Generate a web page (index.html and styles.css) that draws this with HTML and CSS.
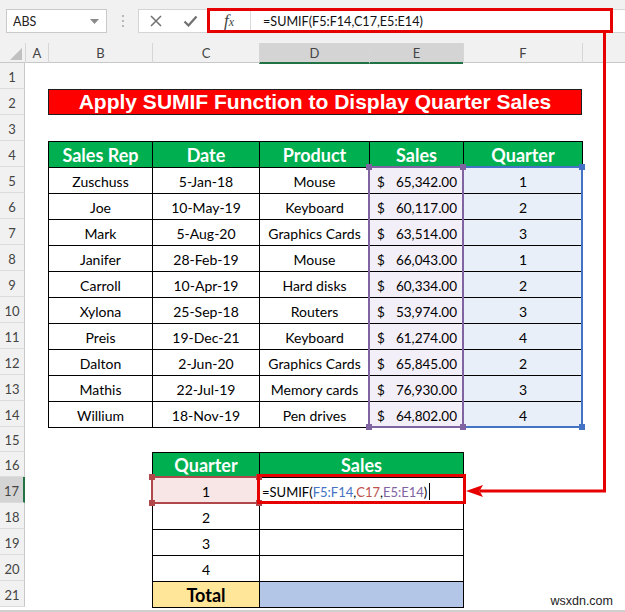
FILE: index.html
```html
<!DOCTYPE html>
<html>
<head>
<meta charset="utf-8">
<title>SUMIF</title>
<link rel="stylesheet" href="styles.css">
</head>
<body>
<div class="app">
  <div class="fbar">
    <div class="namebox"><span>ABS</span><svg class="dd" width="9" height="5" viewBox="0 0 9 5"><path d="M0 0H9L4.5 5Z" fill="#8a8a8a"/></svg></div>
    <div class="grip"><i></i><i></i><i></i></div>
    <div class="formula">
      <span class="fbtn"><svg width="12" height="12" viewBox="0 0 12 12"><path d="M1 1L11 11M11 1L1 11" stroke="#707070" stroke-width="1.5" fill="none"/></svg></span>
      <span class="fbtn"><svg width="15" height="12" viewBox="0 0 15 12"><path d="M1.5 6.5L5.5 10.5L13.5 1.5" stroke="#707070" stroke-width="2.2" fill="none"/></svg></span>
      <span class="fx">f<span>x</span></span>
      <span class="ftext">=SUMIF(F5:F14,C17,E5:E14)</span>
    </div>
  </div>

  <div class="colheads">
    <div class="corner"><svg width="25" height="20" viewBox="0 0 25 20"><path d="M22 5V17H10Z" fill="#c0c0c0"/></svg></div>
    <div class="ch">A</div>
    <div class="ch">B</div>
    <div class="ch">C</div>
    <div class="ch sel">D</div>
    <div class="ch sel">E</div>
    <div class="ch">F</div>
    <div class="ch"></div>
  </div>

  <div class="sheet">
    <div class="rh">1</div><div class="rh">2</div><div class="rh">3</div><div class="rh">4</div>
    <div class="rh">5</div><div class="rh">6</div><div class="rh">7</div><div class="rh">8</div>
    <div class="rh">9</div><div class="rh">10</div><div class="rh">11</div><div class="rh">12</div>
    <div class="rh">13</div><div class="rh">14</div><div class="rh">15</div><div class="rh">16</div>
    <div class="rh sel">17</div><div class="rh">18</div><div class="rh">19</div><div class="rh">20</div>
    <div class="rh">21</div>

    <div class="title">Apply SUMIF Function to Display Quarter Sales</div>

    <div class="t1">
      <div class="th">Sales Rep</div><div class="th">Date</div><div class="th">Product</div><div class="th">Sales</div><div class="th">Quarter</div>
      <div>Zuschuss</div><div>5-Jan-18</div><div>Mouse</div><div class="cur"><span>$</span><span>65,342.00</span></div><div class="q">1</div>
      <div>Joe</div><div>10-May-19</div><div>Keyboard</div><div class="cur"><span>$</span><span>60,117.00</span></div><div class="q">2</div>
      <div>Mark</div><div>5-Aug-20</div><div>Graphics Cards</div><div class="cur"><span>$</span><span>63,514.00</span></div><div class="q">3</div>
      <div>Janifer</div><div>28-Feb-19</div><div>Mouse</div><div class="cur"><span>$</span><span>66,043.00</span></div><div class="q">1</div>
      <div>Carroll</div><div>10-Apr-19</div><div>Hard disks</div><div class="cur"><span>$</span><span>60,334.00</span></div><div class="q">2</div>
      <div>Xylona</div><div>25-Sep-18</div><div>Routers</div><div class="cur"><span>$</span><span>53,974.00</span></div><div class="q">3</div>
      <div>Preis</div><div>19-Dec-21</div><div>Keyboard</div><div class="cur"><span>$</span><span>61,274.00</span></div><div class="q">4</div>
      <div>Dalton</div><div>2-Jun-20</div><div>Graphics Cards</div><div class="cur"><span>$</span><span>65,845.00</span></div><div class="q">2</div>
      <div>Mathis</div><div>22-Jul-19</div><div>Memory cards</div><div class="cur"><span>$</span><span>76,930.00</span></div><div class="q">3</div>
      <div>Willium</div><div>18-Nov-19</div><div>Pen drives</div><div class="cur"><span>$</span><span>64,802.00</span></div><div class="q">4</div>
    </div>

    <div class="rng rng-f"><i class="k tl"></i><i class="k tr"></i><i class="k bl"></i><i class="k br"></i></div>
    <div class="rng rng-e"><i class="k tl"></i><i class="k tr"></i><i class="k bl"></i><i class="k br"></i></div>

    <div class="t2">
      <div class="th">Quarter</div><div class="th">Sales</div>
      <div class="c17">1</div><div class="fcell">=SUMIF(<span class="rb">F5:F14</span>,<span class="rr">C17</span>,<span class="rp">E5:E14</span>)<i class="caret"></i></div>
      <div>2</div><div></div>
      <div>3</div><div></div>
      <div>4</div><div></div>
      <div class="tot">Total</div><div class="blu"></div>
    </div>

    <div class="rng rng-c"><i class="k tl"></i><i class="k tr"></i><i class="k bl"></i><i class="k br"></i></div>
    <div class="redbox"></div>
  </div>

  <div class="bottom"></div>

  <svg class="annot" width="625" height="612" viewBox="0 0 625 612">
    <rect x="208.5" y="9.5" width="403" height="22" fill="none" stroke="#e60000" stroke-width="3"/>
    <path d="M604.5 33V491H480" fill="none" stroke="#e60000" stroke-width="3"/>
    <path d="M466 491L483 485L479.5 491L483 497Z" fill="#e60000"/>
  </svg>
  <div class="wm">wsxdn.com</div>
</div>
</body>
</html>
```

FILE: styles.css
```css
* { box-sizing: border-box; margin: 0; padding: 0; }
html, body { width: 625px; height: 612px; overflow: hidden; background: #fff; }
body { font-family: Lato, "Liberation Sans", sans-serif; color: #000; }

.app { position: relative; width: 625px; height: 612px; }

/* formula bar */
.fbar { height: 43px; background: #f1f1f1; display: flex; align-items: flex-start; padding-top: 9px; }
.namebox { margin-left: 6px; width: 101px; height: 24px; background: #fff; border: 1px solid #cacaca;
  display: flex; align-items: center; justify-content: space-between; padding: 0 7px 0 6px;
  font-size: 12.5px; color: #222; }
.grip { width: 31px; height: 24px; display: flex; flex-direction: column; align-items: center; justify-content: center; gap: 3px; }
.grip i { width: 2px; height: 2px; background: #b8b8b8; }
.formula { flex: 1; height: 24px; background: #fff; border: 1px solid #d4d4d4; border-right: none; display: flex; align-items: center; }
.fbtn { width: 34px; display: flex; justify-content: center; align-items: center; }
.fbtn + .fbtn { width: 35px; }
.fx { width: 42px; text-align: center; font-family: "Liberation Serif", serif; font-style: italic; font-size: 17px; color: #444; }
.fx span { font-size: 12px; }
.ftext { border-left: 1px solid #dadada; height: 100%; display: flex; align-items: center; padding-left: 12px; font-size: 12.6px; color: #111; }

/* column headers */
.colheads { display: grid; grid-template-columns: 25px 23px 104px 107px 110px 94px 119px 1fr; height: 20px;
  background: #f1f1f1; border-bottom: 1px solid #c8c8c8; }
.corner { display: flex; }
.ch { border-left: 1px solid #d6d6d6; display: flex; align-items: center; justify-content: center; font-size: 13px; color: #444; }
.ch.sel { background: #d4d4d4; border-bottom: 2px solid #217346; margin-bottom: -1px; }

/* sheet grid */
.sheet { display: grid; grid-template-columns: 25px 23px 104px 107px 110px 94px 119px 1fr;
  grid-template-rows: repeat(14, 26px) 25px 25px repeat(5, 26px); }
.rh { grid-column: 1; background: #f1f1f1; border-right: 1px solid #c8c8c8; border-bottom: 1px solid #dcdcdc;
  display: flex; align-items: center; justify-content: center; font-size: 13px; color: #444; padding-top: 2px; }
.rh.sel { background: #d4d4d4; border-right: 2px solid #217346; }

.title { grid-column: 3 / 8; grid-row: 2; background: #ff0000; border: 1px solid #1e1e1e; color: #fff;
  font-family: "Liberation Sans", Arial, sans-serif; font-weight: 700; font-size: 21px;
  display: flex; align-items: center; justify-content: center; }

.t1, .t2 { justify-self: start; align-self: start; display: grid; gap: 1px; padding: 1px; background: #000; }
.t1 { grid-column: 3 / 8; grid-row: 4 / 15; grid-template-columns: 103px 106px 109px 93px 118px; grid-template-rows: repeat(11, 25px); }
.t2 { grid-column: 4 / 7; grid-row: 16 / 22; grid-template-columns: 106px 203px; grid-template-rows: 24px repeat(5, 25px); }
.t1 > div, .t2 > div { background: #fff; display: flex; align-items: center; justify-content: center; font-size: 14px; padding-top: 2px; white-space: nowrap; }
.t1 > .th, .t2 > .th { background: #00b050; color: #fff; font-weight: 700; font-size: 18px; padding-top: 0; }
.t1 > .cur { justify-content: space-between; padding: 2px 6px 0 7px; background: #f3eff8; font-size: 13.5px; }
.t1 > .q { background: #e9eff8; }
.t2 > .c17 { background: #f8e5e5; }
.t2 > .fcell { justify-content: flex-start; padding-left: 2px; font-size: 13px; }
.t2 > .tot { background: #ffe699; font-weight: 700; font-size: 18px; padding-top: 0; }
.t2 > .blu { background: #b4c6e7; }
.rb { color: #4472c4; }
.rr { color: #c0504d; }
.rp { color: #8064a2; }
.caret { display: inline-block; width: 1px; height: 17px; background: #000; margin-left: 2px; }

/* range highlights */
.rng { position: relative; margin: -1px; border: 2px solid; }
.rng-e { grid-column: 6; grid-row: 5 / 15; color: #8064a2; border-color: #8064a2; z-index: 3; }
.rng-f { grid-column: 7; grid-row: 5 / 15; color: #4472c4; border-color: #4472c4; z-index: 2; }
.rng-c { grid-column: 4; grid-row: 17; color: #b0474a; border-color: #b0474a; z-index: 2; }
.k { position: absolute; width: 6px; height: 6px; background: currentColor; }
.k.tl { top: -4px; left: -4px; }
.k.tr { top: -4px; right: -4px; }
.k.bl { bottom: -4px; left: -4px; }
.k.br { bottom: -4px; right: -4px; }

.redbox { grid-column: 5 / 7; grid-row: 17; margin: -3px -3px -1px -2px; border: 3px solid #e60000; z-index: 4; }

.bottom { margin-top: 3px; height: 2px; background: #d0d0d0; }

.annot { position: absolute; left: 0; top: 0; pointer-events: none; z-index: 10; }
.wm { position: absolute; right: 12px; bottom: 4px; font-family: "Liberation Sans", Arial, sans-serif; font-size: 12.5px; color: #222; z-index: 11; }
```
